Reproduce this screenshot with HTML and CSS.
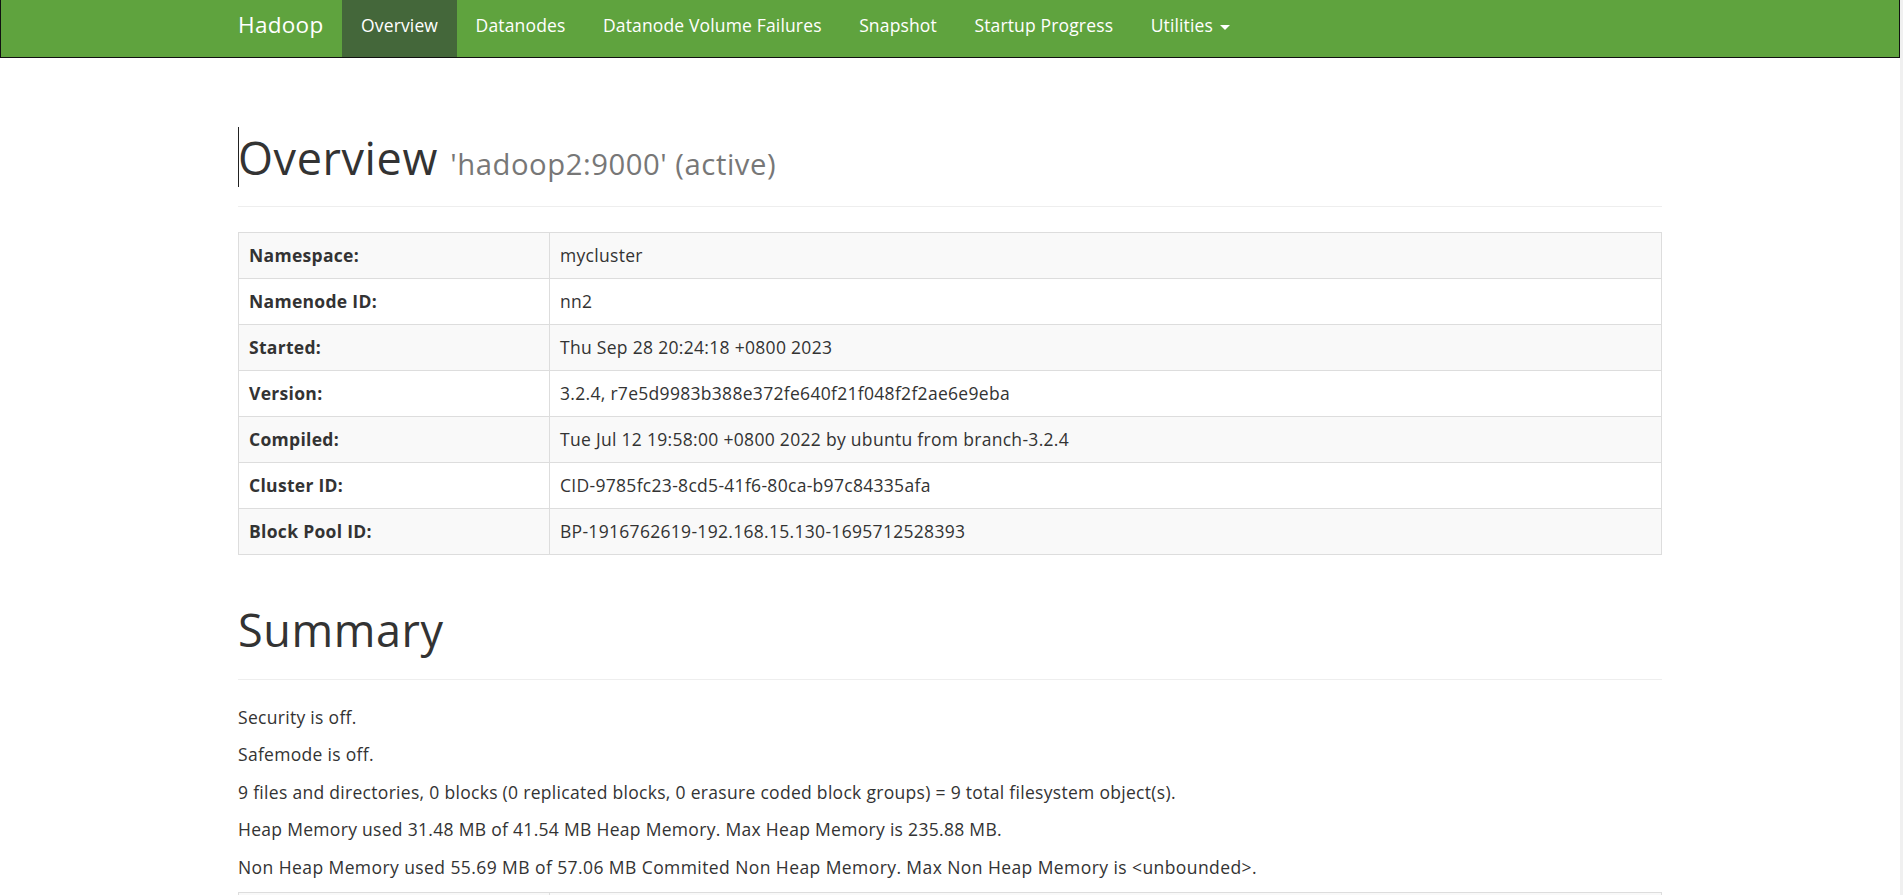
FILE: index.html
```html
<!DOCTYPE html>
<html>
<head>
<meta charset="utf-8">
<title>Namenode information</title>
<link rel="stylesheet" href="styles.css">
</head>
<body>
<div class="page">
  <header class="navbar">
    <div class="navbar-inner">
      <a class="brand" href="#">Hadoop</a>
      <ul class="nav">
        <li class="active"><a href="#">Overview</a></li>
        <li><a href="#">Datanodes</a></li>
        <li><a href="#">Datanode Volume Failures</a></li>
        <li><a href="#">Snapshot</a></li>
        <li><a href="#">Startup Progress</a></li>
        <li><a href="#">Utilities <span class="caret"></span></a></li>
      </ul>
    </div>
  </header>

  <div class="container">
    <div class="page-header first">
      <h1><span class="text-caret"></span>Overview <small>'hadoop2:9000' (active)</small></h1>
    </div>
    <table class="info">
      <tr><th>Namespace:</th><td>mycluster</td></tr>
      <tr><th>Namenode ID:</th><td>nn2</td></tr>
      <tr><th>Started:</th><td>Thu Sep 28 20:24:18 +0800 2023</td></tr>
      <tr><th>Version:</th><td>3.2.4, r7e5d9983b388e372fe640f21f048f2f2ae6e9eba</td></tr>
      <tr><th>Compiled:</th><td>Tue Jul 12 19:58:00 +0800 2022 by ubuntu from branch-3.2.4</td></tr>
      <tr><th>Cluster ID:</th><td>CID-9785fc23-8cd5-41f6-80ca-b97c84335afa</td></tr>
      <tr><th>Block Pool ID:</th><td>BP-1916762619-192.168.15.130-1695712528393</td></tr>
    </table>

    <div class="page-header">
      <h1>Summary</h1>
    </div>
    <p>Security is off.</p>
    <p>Safemode is off.</p>
    <p>9 files and directories, 0 blocks (0 replicated blocks, 0 erasure coded block groups) = 9 total filesystem object(s).</p>
    <p>Heap Memory used 31.48 MB of 41.54 MB Heap Memory. Max Heap Memory is 235.88 MB.</p>
    <p class="wide">Non Heap Memory used 55.69 MB of 57.06 MB Commited Non Heap Memory. Max Non Heap Memory is &lt;unbounded&gt;.</p>
    <table class="info next">
      <tr><th></th><td></td></tr>
      <tr><th></th><td></td></tr>
    </table>
  </div>
</div>
</body>
</html>
```
FILE: styles.css
```css
html {
  background: #f0f0f0;
}
body {
  margin: 0;
  font-family: "Open Sans", "Noto Sans", sans-serif;
  font-size: 17.5px;
  line-height: 25px;
  letter-spacing: 0.3px;
  color: #333;
}
.page {
  width: 1900px;
  min-height: 895px;
  background: #fff;
  overflow: hidden;
}

/* navbar */
.navbar {
  height: 57px;
  background: #5fa33e;
  border: 1px solid #111;
  border-top: 0;
}
.navbar-inner {
  width: 1424px;
  margin: 0 auto;
  display: flex;
  height: 57px;
}
.brand {
  display: block;
  margin-left: -18.75px;
  padding: 12px 18.75px 0;
  font-size: 22.5px;
  line-height: 25px;
  color: #fff;
  text-decoration: none;
}
.nav {
  list-style: none;
  margin: 0;
  padding: 0;
  display: flex;
}
.nav a {
  display: block;
  box-sizing: border-box;
  height: 57px;
  padding: 13px 18.75px 0;
  font-size: 17.5px;
  line-height: 25px;
  letter-spacing: 0.15px;
  color: #fff;
  text-decoration: none;
}
.nav .active a {
  background: #44673a;
}
.caret {
  display: inline-block;
  width: 0;
  height: 0;
  margin-left: 2px;
  vertical-align: middle;
  border-top: 5px solid #fff;
  border-left: 5px solid transparent;
  border-right: 5px solid transparent;
}

/* content */
.container {
  width: 1424px;
  margin: 0 auto;
}
.page-header {
  margin: 50px 0 25px;
  padding-bottom: 11.25px;
  border-bottom: 1px solid #eee;
}
.page-header.first {
  margin-top: 75px;
}
.page-header h1 {
  position: relative;
  margin: 0 0 12.5px;
  font-size: 45px;
  font-weight: 400;
  line-height: 1.1;
  letter-spacing: 0.6px;
  color: #333;
}
.page-header h1 small {
  font-size: 65%;
  font-weight: 400;
  line-height: 1;
  letter-spacing: 0.55px;
  color: #777;
}
.text-caret {
  position: absolute;
  left: 0;
  top: -6px;
  width: 1px;
  height: 60px;
  background: #222;
}

.info {
  width: 100%;
  border-collapse: collapse;
  border: 1px solid #ddd;
  margin-bottom: 25px;
}
.info th,
.info td {
  padding: 10px;
  line-height: 25px;
  border: 1px solid #ddd;
  text-align: left;
  vertical-align: top;
}
.info th {
  width: 290px;
  font-weight: 700;
}
.info tr:nth-child(odd) {
  background: #f9f9f9;
}
.info.next th,
.info.next td {
  height: 25px;
}

p {
  margin: 0 0 12.5px;
}
p.wide {
  letter-spacing: 0.42px;
}
```
